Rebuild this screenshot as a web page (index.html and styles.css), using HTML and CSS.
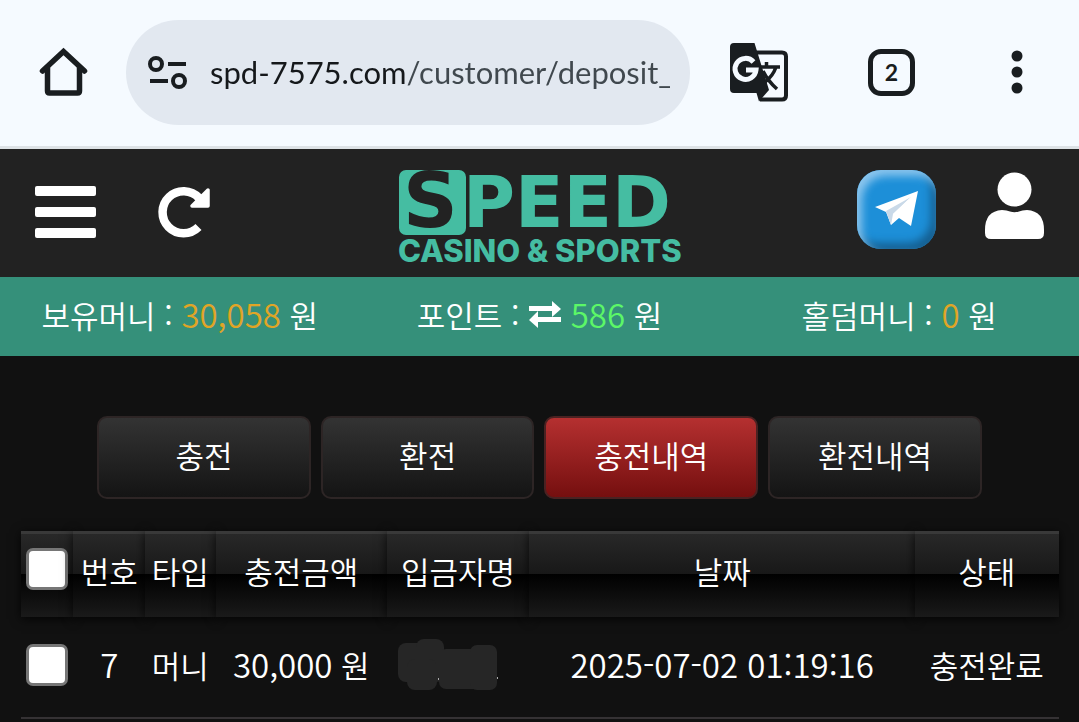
FILE: index.html
```html
<!DOCTYPE html>
<html lang="ko">
<head>
<meta charset="utf-8">
<meta name="viewport" content="width=device-width, initial-scale=1">
<title>충전내역</title>
<link rel="stylesheet" href="styles.css">
</head>
<body>
<div class="browser">
  <button class="icon-btn" aria-label="홈">
    <svg width="47" height="48" viewBox="0 0 47 48" fill="none" stroke="#191d20" stroke-width="5.500" stroke-linejoin="round" stroke-linecap="round"><path d="M2.500 23 23.500 3.500l21 19.500" stroke-linejoin="miter"/><path d="M7.500 20v23q0 2 2 2h28q2 0 2-2V20"/></svg>
  </button>
  <div class="address">
    <svg width="40" height="34" viewBox="0 0 40 34" fill="none" stroke="#191d20" stroke-width="4"><circle cx="8" cy="9" r="6"/><path d="M20 9h18M2 26h18"/><circle cx="31" cy="26" r="6"/></svg>
    <input class="url" type="text" aria-label="주소" value="spd-7575.com/customer/deposit_">
  </div>
  <div class="browser-actions">
    <button class="icon-btn" aria-label="번역">
      <svg width="59" height="59" viewBox="0 0 59 59"><path d="M25 9.500h27q4 0 4 4v39q0 4-4 4H30" fill="none" stroke="#191d20" stroke-width="4"/><path d="M4 0h20.500l14.500 47-10 11.500-2.500-8.500H4q-4 0-4-4V4q0-4 4-4z" fill="#191d20"/><path d="M23.500 19a10.500 10.500 0 1 0 2.500 8H16" fill="none" stroke="#f5faff" stroke-width="5"/><path d="M30 24h20M36.500 19v5M46 24q-3 9-11 15M33 28q5 10 14 18" fill="none" stroke="#191d20" stroke-width="3.500"/></svg>
    </button>
    <button class="tabs" aria-label="탭 2개">2</button>
    <button class="icon-btn" aria-label="메뉴">
      <svg width="12" height="44" viewBox="0 0 12 44" fill="#191d20"><circle cx="6" cy="6" r="5.500"/><circle cx="6" cy="22" r="5.500"/><circle cx="6" cy="38" r="5.500"/></svg>
    </button>
  </div>
</div>

<header class="site-header">
  <div class="side">
    <button class="icon-btn" aria-label="전체 메뉴">
      <svg width="61" height="54" viewBox="0 0 61 54" fill="#fff"><rect y="1" width="61" height="10" rx="2"/><rect y="22" width="61" height="10" rx="2"/><rect y="43" width="61" height="10" rx="2"/></svg>
    </button>
    <button class="icon-btn" aria-label="새로고침">
      <svg width="52" height="52" viewBox="0 0 52 52"><path d="M41 12A21 21 0 1 0 40.500 41" fill="none" stroke="#fff" stroke-width="8.500"/><path d="M50 4v16H34z" fill="#fff" stroke="#fff" stroke-width="3.500" stroke-linejoin="round"/></svg>
    </button>
  </div>
  <a class="logo" href="#" aria-label="SPEED CASINO &amp; SPORTS">
    <svg width="284" height="96" viewBox="0 0 284 96">
      <rect x="1" y="1" width="67" height="65" rx="7" fill="#45bda2"/>
      <text class="logo-word" x="5" y="58"><tspan class="logo-s">S</tspan><tspan x="65">PEED</tspan></text>
      <text class="logo-sub" x="0" y="93">CASINO &amp; SPORTS</text>
    </svg>
  </a>
  <div class="side side-end">
    <a class="telegram" href="#" aria-label="텔레그램">
      <svg width="44" height="38" viewBox="0 0 44 38"><path d="M0 17 43 1 36 36 24 28l-8 7-5-13z" fill="#fff"/><path d="M11 21 36 7 18 24l-2 11z" fill="#c9d9e8"/><path d="M18 24 36 7 24 28z" fill="#fff"/></svg>
    </a>
    <button class="icon-btn" aria-label="내 정보">
      <svg width="59" height="70" viewBox="0 -2 59 70" fill="#fff"><circle cx="29.500" cy="17.500" r="17"/><path d="M17 38q5 0 8 1.500 4.500 1.500 9 0 3-1.500 8-1.500 17 1 17 20v3q0 6-6 6H6q-6 0-6-6v-3q0-19 17-20z"/></svg>
    </button>
  </div>
</header>

<section class="balances">
  <p>보유머니 : <span class="num gold">30,058</span> 원</p>
  <p>포인트 : <svg class="swap" width="34" height="28" viewBox="0 0 34 28" fill="#fff"><path d="M1 6h23V1l9 8-9 8v-6H1zM33 17H10v-6l-9 9 9 8v-6h23z"/></svg> <span class="num green">586</span> 원</p>
  <p>홀덤머니 : <span class="num gold">0</span> 원</p>
</section>

<main>
  <nav class="menu">
    <button>충전</button>
    <button>환전</button>
    <button class="active">충전내역</button>
    <button>환전내역</button>
  </nav>
  <table class="history">
    <thead>
      <tr>
        <th class="c-check"><input type="checkbox" aria-label="전체 선택"></th>
        <th class="c-no">번호</th>
        <th class="c-type">타입</th>
        <th class="c-amount">충전금액</th>
        <th class="c-name">입금자명</th>
        <th class="c-date">날짜</th>
        <th class="c-state">상태</th>
      </tr>
    </thead>
    <tbody>
      <tr>
        <td><input type="checkbox" aria-label="7번 선택"></td>
        <td><span class="num">7</span></td>
        <td>머니</td>
        <td><span class="num">30,000</span> 원</td>
        <td class="masked">
          <svg width="100" height="52" viewBox="0 0 100 52" fill="#262626"><rect y="4" width="46" height="39" rx="8"/><rect x="18" width="28" height="40" rx="8"/><rect x="9" y="20" width="30" height="31" rx="8"/><rect x="41" y="10" width="56" height="40" rx="7"/><rect x="72" y="6" width="27" height="45" rx="7"/><path d="M40 39h1v2h-1zM99 38h1v2h-1z" fill="#aaa"/><path d="M38 12h12v26H38z"/></svg>
        </td>
        <td><span class="num">2025-07-02 01:19:16</span></td>
        <td>충전완료</td>
      </tr>
    </tbody>
  </table>
</main>
</body>
</html>
```
FILE: styles.css
```css
* { box-sizing: border-box; }
body {
  margin: 0;
  background: #111;
  color: #fff;
  font: 350 31px/44px "Noto Sans CJK KR", sans-serif;
}
button { font: inherit; color: inherit; cursor: pointer; }
svg { display: block; flex: none; overflow: visible; }
p { margin: 0; }

.icon-btn { padding: 0; border: 0; background: none; }

.browser {
  display: flex;
  align-items: center;
  height: 149px;
  padding: 0 56px 2px 40px;
  background: #f5faff;
  border-bottom: 3px solid #dde2e6;
}
.address {
  flex: 1;
  display: flex;
  align-items: center;
  gap: 22px;
  height: 105px;
  margin: 0 40px 0 39px;
  padding: 0 20px 0 22px;
  border-radius: 53px;
  background: #e2e8f0;
}
.url {
  flex: 1;
  min-width: 0;
  padding: 0;
  border: 0;
  outline: 0;
  font: 400 31px/44px Lato, sans-serif;
  color: #40484e;
  background: linear-gradient(to right, #15181b 196px, #40484e 196px);
  background-clip: text;
  -webkit-background-clip: text;
  -webkit-text-fill-color: transparent;
}
.browser-actions { display: flex; align-items: center; gap: 79px; }
.tabs {
  width: 47px;
  height: 47px;
  padding: 0;
  border: 5px solid #191d20;
  border-radius: 13px;
  background: none;
  color: #191d20;
  font: 700 23px/32px Lato, sans-serif;
}
.browser-actions > :last-child { margin-left: 17px; }

.site-header {
  display: grid;
  grid-template-columns: 1fr auto 1fr;
  align-items: center;
  height: 128px;
  padding: 0 35px;
  background: #222;
}
.side { display: flex; align-items: center; gap: 62px; padding-bottom: 3px; }
.side-end { align-items: flex-start; justify-content: flex-end; gap: 49px; padding-bottom: 8px; }
.logo { padding-top: 8px; }
.logo-word { font: 700 71px "DejaVu Sans", sans-serif; fill: #45bda2; }
.logo-s { font-size: 76px; fill: #222; }
.logo-sub { font: 800 31px Inter, sans-serif; fill: #45bda2; }
.telegram {
  display: grid;
  place-items: center;
  width: 79px;
  height: 79px;
  border-radius: 24px;
  background: #1d8fd8;
  box-shadow: inset 5px 6px 8px #8cc6ee, inset -5px -6px 8px #155f91;
}

.balances {
  display: grid;
  grid-template-columns: repeat(3, 1fr);
  align-items: center;
  height: 79px;
  padding-bottom: 4px;
  background: #35907a;
  text-align: center;
}
.swap { display: inline-block; }
.num { font-size: 33px; }
.gold { color: #e0a526; }
.green { color: #5cf767; }

.menu {
  display: flex;
  gap: 10px;
  width: 82%;
  margin: 60px auto 32px;
}
.menu button {
  flex: 1;
  height: 83px;
  padding: 0 0 6px;
  border: 2px solid #2d2525;
  border-radius: 10px;
  background: linear-gradient(#333, #141414);
}
.menu .active { background: linear-gradient(#b53030, #750f0f); border-color: #4a2222; }

.history {
  width: calc(100% - 41px);
  margin: 0 auto;
  border-spacing: 0;
  table-layout: fixed;
  text-align: center;
  white-space: nowrap;
}
.history th {
  height: 86px;
  padding: 0 0 9px;
  font-weight: 350;
  background: linear-gradient(#282828, #181818 48%, #000 48%, #1a1a1a);
  border-top: 3px solid #393939;
  box-shadow: 0 2px 10px rgba(0, 0, 0, 0.8);
}
.history .c-check { padding-bottom: 13px; }
.history td {
  height: 102px;
  padding: 0 0 5px;
  border-bottom: 2px solid #353234;
}
.history .masked { padding-left: 11px; }
.c-check { width: 5.1%; }
.c-no { width: 6.9%; }
.c-type { width: 6.8%; }
.c-amount { width: 16.5%; }
.c-name { width: 13.7%; }
.c-date { width: 37.2%; }
.c-state { width: 13.8%; }
.history input {
  appearance: none;
  display: block;
  width: 42px;
  height: 42px;
  margin: 0 auto;
  border: 3px solid #767676;
  border-radius: 7px;
  background: #fff;
}
```
